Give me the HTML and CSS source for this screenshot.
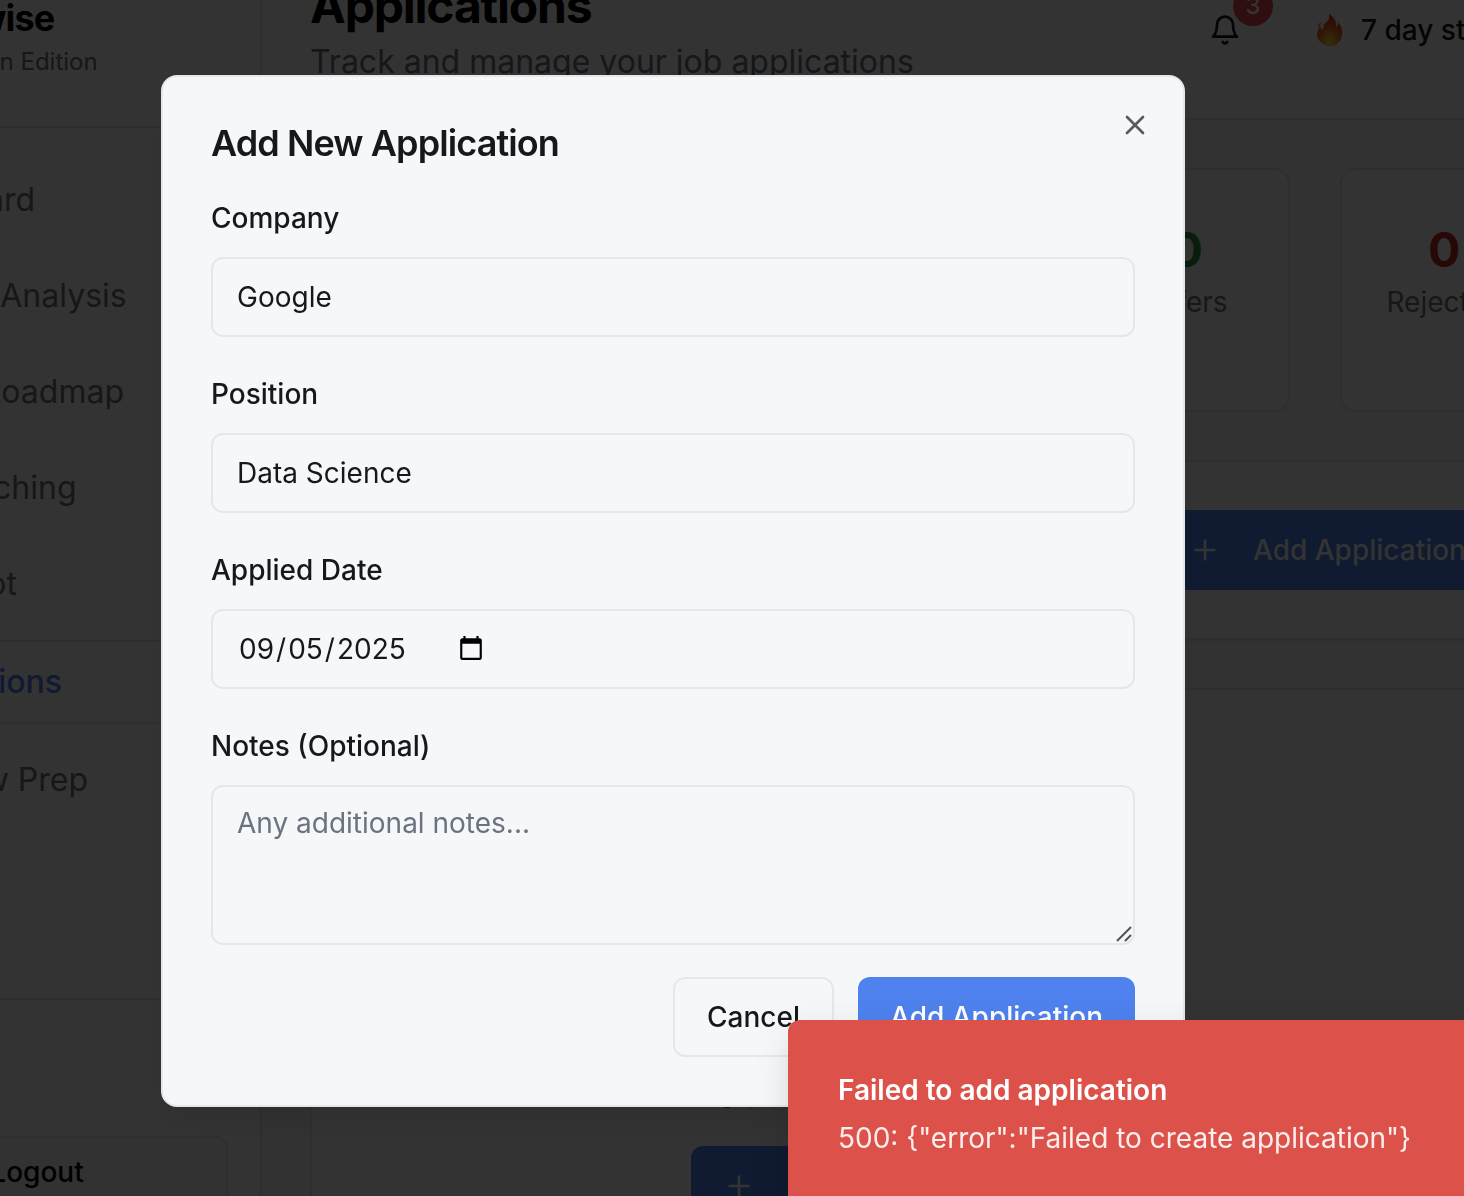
FILE: index.html
```html
<!DOCTYPE html>
<html lang="en">
<head>
<meta charset="utf-8">
<title>Applications</title>
<link rel="stylesheet" href="styles.css">
</head>
<body>
<div class="page">
  <aside class="sidebar">
    <div class="brand">
      <div class="brand-name">Pathwise</div>
      <div class="brand-sub">Malaysian Edition</div>
    </div>
    <nav class="nav">
      <a class="nav-item" href="#">Dashboard</a>
      <a class="nav-item" href="#">Resume Analysis</a>
      <a class="nav-item" href="#">Career Roadmap</a>
      <a class="nav-item" href="#">Job Matching</a>
      <a class="nav-item" href="#">AI Copilot</a>
      <a class="nav-item active" href="#">Applications</a>
      <a class="nav-item" href="#">Interview Prep</a>
    </nav>
    <div class="account">
      <button class="logout" type="button">
        <svg class="icon" viewBox="0 0 24 24"><path d="M9 21H5a2 2 0 0 1-2-2V5a2 2 0 0 1 2-2h4M16 17l5-5-5-5M21 12H9"/></svg>
        Logout
      </button>
    </div>
  </aside>
  <main class="main">
    <header class="header">
      <div>
        <h1 class="page-title">Applications</h1>
        <p class="page-sub">Track and manage your job applications</p>
      </div>
      <div class="header-tools">
        <div class="bell">
          <svg class="icon" viewBox="0 0 24 24"><path d="M6 8a6 6 0 0 1 12 0c0 7 3 9 3 9H3s3-2 3-9M10.3 21a1.94 1.94 0 0 0 3.4 0"/></svg>
          <span class="badge">3</span>
        </div>
        <div class="streak">
          <svg class="flame" viewBox="0 0 26 32">
            <defs>
              <radialGradient id="fire" cx="0.5" cy="0.88" r="0.8">
                <stop offset="0" stop-color="#ffe45c"/>
                <stop offset="0.3" stop-color="#fba52c"/>
                <stop offset="0.65" stop-color="#ee5a24"/>
                <stop offset="1" stop-color="#d9381e"/>
              </radialGradient>
            </defs>
            <path fill="url(#fire)" d="M12 0c5 3 8 8 7 13 2-1 2-3 2-5 3 4 5 8 4 13-1 7-6 11-12 11S1 28 0 21c0-4 2-6 3-9 1 2 1 3 2 4 2-2 2-4 2-6 4-2 6-6 5-10z"/>
            <path fill="#ee5a24" d="M4 8c-2 1-3 3-3 5 1-1 3-2 3-5z"/>
          </svg>
          <span>7 day streak</span>
        </div>
      </div>
    </header>
    <div class="content">
      <section class="stats">
        <div class="stat"></div>
        <div class="stat"></div>
        <div class="stat"></div>
        <div class="stat"><b class="stat-num green">0</b><span>Offers</span></div>
        <div class="stat"><b class="stat-num red">0</b><span>Rejected</span></div>
      </section>
      <section class="filters">
        <button class="primary wide" type="button">
          <svg class="icon" viewBox="0 0 24 24"><path d="M5 12h14M12 5v14"/></svg>
          Add Application
        </button>
      </section>
      <section class="empty">
        <p class="empty-text">Start tracking your job applications to see them here</p>
        <button class="primary first" type="button">
          <svg class="icon" viewBox="0 0 24 24"><path d="M5 12h14M12 5v14"/></svg>
          Add Your First Application
        </button>
      </section>
    </div>
  </main>
</div>

<div class="overlay">
  <div class="modal" role="dialog" aria-modal="true" aria-labelledby="dialog-title">
    <h2 class="modal-title" id="dialog-title">Add New Application</h2>
    <button class="close" type="button" aria-label="Close">
      <svg class="icon" viewBox="0 0 24 24"><path d="M18 6 6 18M6 6l12 12"/></svg>
    </button>
    <form class="form">
      <div class="field">
        <label for="company">Company</label>
        <input class="control" id="company" type="text" value="Google">
      </div>
      <div class="field">
        <label for="position">Position</label>
        <input class="control" id="position" type="text" value="Data Science">
      </div>
      <div class="field">
        <label for="date">Applied Date</label>
        <input class="control date" id="date" type="date" value="2025-09-05">
      </div>
      <div class="field">
        <label for="notes">Notes (Optional)</label>
        <div class="notes-wrap">
          <textarea class="control notes" id="notes" placeholder="Any additional notes..."></textarea>
          <svg class="grip" viewBox="0 0 16 16"><path d="M1 15 15 1M9 15l6-6"/></svg>
        </div>
      </div>
      <div class="actions">
        <button class="secondary" type="button">Cancel</button>
        <button class="primary" type="button">Add Application</button>
      </div>
    </form>
  </div>
</div>

<div class="toast" role="alert">
  <div class="toast-title">Failed to add application</div>
  <div class="toast-text">500: {"error":"Failed to create application"}</div>
</div>
</body>
</html>
```
FILE: styles.css
```css
:root {
  --ink: #16181b;
  --muted: #6b7280;
  --line: #e5e7eb;
  --surface: #f6f7f9;
  --primary: #4f82ee;
  --danger: #dc5149;
}
* { box-sizing: border-box; }
body {
  margin: 0;
  height: 100vh;
  overflow: hidden;
  background: #f7f7f7;
  color: var(--ink);
  font: 400 28px/40px Inter, "Liberation Sans", sans-serif;
}
h1, h2, p { margin: 0; }
button, input, textarea { font: inherit; color: inherit; }
.icon {
  width: 32px;
  height: 32px;
  flex: none;
  fill: none;
  stroke: currentColor;
  stroke-width: 2;
  stroke-linecap: round;
  stroke-linejoin: round;
}

/* page behind the dialog */
.page {
  --muted: #6e7378;
  --line: #e6e6e8;
  display: flex;
  width: calc(100% + 382px);
  height: calc(100% + 102px);
  margin: -58px 0 0 -250px;
}
.sidebar {
  display: flex;
  flex-direction: column;
  width: 512px;
  flex: none;
  background: #fff;
  border-right: 2px solid var(--line);
}
.brand {
  padding: 48px 48px 48px 150px;
  border-bottom: 2px solid var(--line);
}
.brand-name {
  font-size: 36px;
  line-height: 56px;
  font-weight: 700;
  letter-spacing: -0.025em;
  color: #000;
}
.brand-sub { font-size: 24px; line-height: 32px; color: var(--muted); }
.nav {
  display: flex;
  flex: 1;
  flex-direction: column;
  gap: 16px;
  padding-top: 32px;
}
.nav-item {
  padding: 16px 32px 16px 120px;
  font-size: 32px;
  line-height: 48px;
  color: var(--muted);
  text-decoration: none;
}
.nav-item.active {
  border: solid var(--line);
  border-width: 2px 0;
  padding-left: 122px;
  color: var(--primary);
  font-weight: 500;
}
.account { padding: 136px 32px 32px; border-top: 2px solid var(--line); }
.logout {
  display: flex;
  align-items: center;
  justify-content: center;
  gap: 32px;
  width: 100%;
  height: 72px;
  border: 2px solid var(--line);
  border-radius: 12px;
  background: #f7f7f7;
  color: #000;
  font-weight: 500;
}
.main { flex: 1; min-width: 0; display: flex; flex-direction: column; }
.header {
  display: flex;
  justify-content: space-between;
  padding: 32px 48px;
  background: #fff;
  border-bottom: 2px solid var(--line);
}
.page-title {
  font-size: 48px;
  line-height: 64px;
  font-weight: 700;
  letter-spacing: -0.025em;
  color: #000;
}
.page-sub { font-size: 32px; line-height: 48px; color: var(--muted); }
.header-tools { display: flex; align-items: center; gap: 76px; padding-right: 24px; }
.bell { position: relative; display: flex; }
.badge {
  position: absolute;
  top: -28px;
  left: 24px;
  width: 40px;
  height: 40px;
  border-radius: 20px;
  background: #e7484d;
  color: #fff;
  font-size: 24px;
  text-align: center;
  font-weight: 500;
}
.streak { display: flex; align-items: center; gap: 18px; font-weight: 500; }
.flame { width: 26px; height: 32px; }
.content { flex: 1; display: flex; flex-direction: column; gap: 48px; padding: 48px 48px 0; }
.stats { display: grid; grid-template-columns: repeat(5, minmax(0, 1fr)); gap: 50px; }
.stat {
  display: flex;
  flex-direction: column;
  align-items: center;
  min-height: 244px;
  padding: 48px 0;
  border: 2px solid var(--line);
  border-radius: 16px;
  background: #fff;
  color: var(--muted);
}
.stat-num { font-size: 48px; line-height: 64px; }
.green { color: #2f8f3c; }
.red { color: #c42a22; }
.filters {
  padding: 48px;
  border: 2px solid var(--line);
  background: #fff;
  box-shadow: 0 2px 4px rgba(0, 0, 0, 0.05);
}
.primary, .secondary {
  height: 80px;
  padding: 0 32px;
  border: 0;
  border-radius: 12px;
  background: var(--primary);
  color: #fff;
  font-weight: 500;
}
.secondary { border: 2px solid var(--line); background: transparent; color: var(--ink); }
.wide, .first { display: flex; align-items: center; gap: 32px; }
.wide { width: 100%; padding-left: 829px; white-space: nowrap; }
.empty {
  flex: 1;
  display: flex;
  flex-direction: column;
  align-items: center;
  gap: 32px;
  padding-top: 376px;
  border: 2px solid var(--line);
  background: #fff;
}
.empty-text { font-size: 32px; line-height: 48px; color: var(--muted); }

/* dialog */
.overlay {
  position: fixed;
  inset: 0;
  display: flex;
  align-items: flex-start;
  justify-content: center;
  padding: 75px 118px 0 0;
  background: rgba(0, 0, 0, 0.8);
}
.modal {
  position: relative;
  width: 1024px;
  padding: 48px;
  border: 2px solid var(--line);
  border-radius: 16px;
  background: var(--surface);
  box-shadow: 0 20px 30px -6px rgba(0, 0, 0, 0.1);
}
.modal-title { font-size: 36px; line-height: 36px; font-weight: 600; letter-spacing: -0.025em; }
.close {
  position: absolute;
  top: 32px;
  right: 32px;
  display: flex;
  padding: 0;
  border: 0;
  background: none;
  opacity: 0.7;
}
.form { display: flex; flex-direction: column; gap: 32px; margin-top: 32px; }
.field { display: flex; flex-direction: column; gap: 14px; }
.field label { line-height: 50px; font-weight: 500; }
.control {
  width: 100%;
  height: 80px;
  padding: 16px 24px;
  border: 2px solid var(--line);
  border-radius: 12px;
  background: var(--surface);
  outline: none;
}
.date { display: flex; }
.date::-webkit-datetime-edit-month-field,
.date::-webkit-datetime-edit-day-field,
.date::-webkit-datetime-edit-year-field { padding: 0 2px; }
.date::-webkit-calendar-picker-indicator { margin-left: 7px; }
.notes-wrap { position: relative; display: flex; }
.notes { height: 160px; resize: none; }
.notes::placeholder { color: var(--muted); }
.grip {
  position: absolute;
  right: 3px;
  bottom: 3px;
  width: 16px;
  height: 16px;
  fill: none;
  stroke: #555;
  stroke-width: 2;
}
.actions { display: flex; justify-content: flex-end; gap: 24px; }

/* toast */
.toast {
  position: fixed;
  right: -52px;
  bottom: -52px;
  width: 728px;
  height: 228px;
  padding: 50px;
  border-radius: 12px;
  background: var(--danger);
  color: #fff;
  box-shadow: 0 20px 30px -6px rgba(0, 0, 0, 0.1), 0 8px 40px rgba(0, 0, 0, 0.08);
}
.toast-title { margin-bottom: 8px; font-weight: 600; }
.toast-text { opacity: 0.9; white-space: nowrap; }
```
